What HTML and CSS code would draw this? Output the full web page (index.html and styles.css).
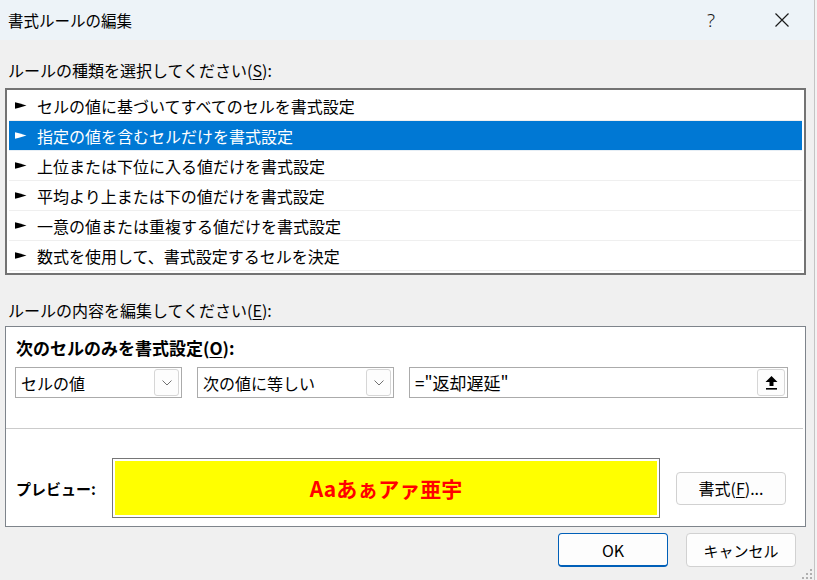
FILE: index.html
```html
<!DOCTYPE html>
<html lang="ja">
<head>
<meta charset="utf-8">
<title>書式ルールの編集</title>
<link rel="stylesheet" href="styles.css">
</head>
<body>
<div class="window">
  <div class="titlebar">
    <span class="title">書式ルールの編集</span>
    <span class="help">?</span>
    <span class="close">
      <svg width="16" height="16" viewBox="0 0 16 16"><path d="M1.5 1.5 L14.5 14.5 M14.5 1.5 L1.5 14.5" stroke="#1a1a1a" stroke-width="1.2" fill="none"/></svg>
    </span>
  </div>

  <div class="label label-first">ルールの種類を選択してください(<u>S</u>):</div>

  <div class="listbox">
    <div class="row"><svg class="pointer" width="12" height="9" viewBox="0 0 12 9"><polygon points="0,1.3 4,2.3 11.5,4.5 4,6.7 0,7.7"/></svg><span>セルの値に基づいてすべてのセルを書式設定</span></div>
    <div class="row selected"><svg class="pointer" width="12" height="9" viewBox="0 0 12 9"><polygon points="0,1.3 4,2.3 11.5,4.5 4,6.7 0,7.7"/></svg><span>指定の値を含むセルだけを書式設定</span></div>
    <div class="row"><svg class="pointer" width="12" height="9" viewBox="0 0 12 9"><polygon points="0,1.3 4,2.3 11.5,4.5 4,6.7 0,7.7"/></svg><span>上位または下位に入る値だけを書式設定</span></div>
    <div class="row"><svg class="pointer" width="12" height="9" viewBox="0 0 12 9"><polygon points="0,1.3 4,2.3 11.5,4.5 4,6.7 0,7.7"/></svg><span>平均より上または下の値だけを書式設定</span></div>
    <div class="row"><svg class="pointer" width="12" height="9" viewBox="0 0 12 9"><polygon points="0,1.3 4,2.3 11.5,4.5 4,6.7 0,7.7"/></svg><span>一意の値または重複する値だけを書式設定</span></div>
    <div class="row"><svg class="pointer" width="12" height="9" viewBox="0 0 12 9"><polygon points="0,1.3 4,2.3 11.5,4.5 4,6.7 0,7.7"/></svg><span>数式を使用して、書式設定するセルを決定</span></div>
  </div>

  <div class="label label-second">ルールの内容を編集してください(<u>E</u>):</div>

  <div class="content">
    <div class="bold-label">次のセルのみを書式設定(<u>O</u>):</div>
    <div class="controls">
      <div class="combo combo-1">
        <span class="combo-text">セルの値</span>
        <span class="combo-btn"><svg width="10" height="6" viewBox="0 0 10 6"><path d="M0.5 0.5 L5 5 L9.5 0.5" stroke="#707070" stroke-width="1" fill="none"/></svg></span>
      </div>
      <div class="combo combo-2">
        <span class="combo-text">次の値に等しい</span>
        <span class="combo-btn"><svg width="10" height="6" viewBox="0 0 10 6"><path d="M0.5 0.5 L5 5 L9.5 0.5" stroke="#707070" stroke-width="1" fill="none"/></svg></span>
      </div>
      <div class="combo field">
        <span class="combo-text field-text">="返却遅延"</span>
        <span class="combo-btn upload"><svg width="13" height="14" viewBox="0 0 13 14"><polygon points="6.5,0 12.5,6 8.5,6 8.5,10 4.5,10 4.5,6 0.5,6" fill="#000"/><rect x="1" y="12" width="11" height="1.6" fill="#000"/></svg></span>
      </div>
    </div>
    <div class="separator"></div>
    <div class="preview-row">
      <span class="preview-label">プレビュー:</span>
      <div class="preview-box"><div class="preview-inner">Aaあぁアァ亜宇</div></div>
      <button class="btn format-btn">書式(<u>F</u>)...</button>
    </div>
  </div>

  <div class="buttons">
    <button class="btn ok">OK</button>
    <button class="btn cancel">キャンセル</button>
  </div>

  <div class="grip">
    <i class="d1"></i><i class="d2"></i><i class="d3"></i><i class="d4"></i><i class="d5"></i><i class="d6"></i>
  </div>
</div>
</body>
</html>
```

FILE: styles.css
```css
* { box-sizing: border-box; }
html, body { margin: 0; padding: 0; }
body {
  background: #f3f3f3;
  font-family: "Noto Sans CJK JP", "Noto Sans", sans-serif;
  color: #000;
}
.window {
  position: relative;
  width: 815px;
  height: 580px;
  background: #f0f0f0;
  border-right: 1px solid #c4c4c4;
  overflow: hidden;
}
.titlebar {
  height: 40px;
  background: #edf3f8;
  display: flex;
  align-items: center;
  padding-left: 8px;
}
.title { font-size: 15.5px; line-height: 20px; }
.help {
  margin-left: auto;
  width: 46px;
  text-align: center;
  font-family: "Noto Sans", sans-serif;
  font-weight: 300;
  font-size: 19px;
  line-height: 20px;
  color: #1a1a1a;
}
.close {
  width: 46px;
  margin-left: 25px;
  margin-right: 9px;
  display: flex;
  justify-content: center;
}
.label {
  font-size: 16px;
  line-height: 24px;
  height: 24px;
  padding-left: 8px;
  white-space: nowrap;
}
.label-first { margin-top: 18px; margin-bottom: 6px; }
.label-second { margin-top: 23px; margin-bottom: 4px; }
u { text-decoration: underline; text-underline-offset: 2px; }

.listbox {
  margin-left: 5px;
  width: 801px;
  height: 187px;
  background: #fff;
  border: 2px solid #737373;
  padding: 1px 0 2px;
}
.row {
  height: 30px;
  margin: 0 2px;
  border-bottom: 1px solid #efefef;
  display: flex;
  align-items: center;
  font-size: 16px;
  white-space: nowrap;
}
.row .pointer { margin-left: 6px; margin-right: 10px; fill: #000; }
.row.selected {
  background: #0078d4;
  color: #fff;
  border-bottom-color: #e6eef5;
}
.row.selected .pointer { fill: #fff; }

.content {
  margin-left: 5px;
  width: 801px;
  height: 201px;
  background: #fff;
  border: 1px solid #7e848b;
}
.bold-label {
  font-weight: bold;
  font-size: 17px;
  line-height: 22px;
  margin-top: 10px;
  padding-left: 10px;
  white-space: nowrap;
}
.controls {
  display: flex;
  gap: 15px;
  margin-top: 8px;
  padding-left: 9px;
}
.combo {
  height: 31px;
  border: 1px solid #ababab;
  background: #fff;
  display: flex;
  align-items: center;
  padding-left: 5px;
  padding-right: 2px;
}
.combo-1 { width: 167px; }
.combo-2 { width: 197px; }
.field { width: 379px; }
.combo-text { font-size: 16px; line-height: 20px; white-space: nowrap; }
.field-text { font-size: 17px; }
.combo-btn {
  margin-left: auto;
  width: 25px;
  height: 27px;
  border: 1px solid #d6d6d6;
  border-radius: 3px;
  background: #fdfdfd;
  display: flex;
  align-items: center;
  justify-content: center;
}
.upload { width: 28px; }
.separator {
  margin-top: 30px;
  margin-right: 2px;
  height: 1px;
  background: #cbcbcb;
}
.preview-row {
  margin-top: 29px;
  height: 60px;
  display: flex;
  align-items: center;
  padding-left: 10px;
}
.preview-label {
  font-weight: bold;
  font-size: 15px;
  width: 96px;
  white-space: nowrap;
}
.preview-box {
  width: 548px;
  height: 60px;
  border: 1px solid #767676;
  background: #fff;
  padding: 2px;
}
.preview-inner {
  height: 100%;
  background: #ffff00;
  color: #ff0000;
  font-weight: bold;
  font-size: 21px;
  display: flex;
  align-items: center;
  justify-content: center;
}
.btn {
  font-family: "Noto Sans CJK JP", "Noto Sans", sans-serif;
  background: #fdfdfd;
  border: 1px solid #d1d1d1;
  border-radius: 4px;
  color: #000;
  padding: 0;
  white-space: nowrap;
}
.format-btn {
  margin-left: 16px;
  width: 110px;
  height: 33px;
  font-size: 16px;
}
.buttons {
  display: flex;
  justify-content: flex-end;
  gap: 18px;
  margin-top: 6px;
  padding-right: 18px;
}
.buttons .btn { width: 110px; height: 34px; font-size: 16px; }
.cancel { font-size: 15px !important; }
.ok { border-color: #005fb8; border-bottom-width: 2px; }
.grip { position: absolute; right: 0; bottom: 0; width: 12px; height: 12px; }
.grip i { position: absolute; width: 2px; height: 2px; background: #b0b0b0; }
.grip .d1 { right: 2px; top: 1px; }
.grip .d2 { right: 2px; top: 5px; }
.grip .d3 { right: 6px; top: 5px; }
.grip .d4 { right: 2px; top: 9px; }
.grip .d5 { right: 6px; top: 9px; }
.grip .d6 { right: 10px; top: 9px; }
```
